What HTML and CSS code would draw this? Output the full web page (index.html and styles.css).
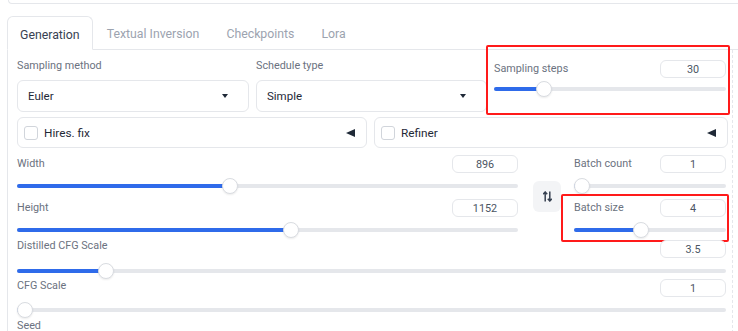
FILE: index.html
```html
<!DOCTYPE html>
<html>
<head>
  <title>txt2img</title>
  <link rel="stylesheet" href="styles.css">
</head>
<body>
  <div class="top-panel"></div>

  <div class="tabs">
    <div class="tab-nav">
      <button class="tab selected">Generation</button>
      <button class="tab">Textual Inversion</button>
      <button class="tab">Checkpoints</button>
      <button class="tab">Lora</button>
      <div class="tab-fill"></div>
    </div>

    <div class="tab-panel">
      <!-- sampler row -->
      <div class="row-sampler">
        <div class="field">
          <div class="label">Sampling method</div>
          <div class="dropdown"><span>Euler</span><i class="caret"></i></div>
        </div>
        <div class="field">
          <div class="label">Schedule type</div>
          <div class="dropdown"><span>Simple</span><i class="caret"></i></div>
        </div>
        <div class="slider slider-steps mark mark-steps">
          <div class="slider-head"><span class="label">Sampling steps</span><input class="num" value="30"></div>
          <div class="track" style="--p:0.195"><div class="fill"></div><div class="thumb"></div></div>
        </div>
      </div>

      <!-- accordions -->
      <div class="row-acc">
        <div class="accordion"><span class="check"></span><span class="acc-label">Hires. fix</span><i class="acc-arrow"></i></div>
        <div class="accordion"><span class="check"></span><span class="acc-label">Refiner</span><i class="acc-arrow"></i></div>
      </div>

      <!-- dimensions and batch -->
      <div class="row-dims">
        <div class="col-dims">
          <div class="slider">
            <div class="slider-head"><span class="label">Width</span><input class="num" value="896"></div>
            <div class="track" style="--p:0.422"><div class="fill"></div><div class="thumb"></div></div>
          </div>
          <div class="slider">
            <div class="slider-head"><span class="label">Height</span><input class="num" value="1152"></div>
            <div class="track" style="--p:0.549"><div class="fill"></div><div class="thumb"></div></div>
          </div>
        </div>
        <button class="swap" title="Switch width/height">
          <svg width="9" height="11" viewBox="0 0 9 11">
            <path d="M2.2 10.5V1M0.2 3.2L2.2 1L4.2 3.2" fill="none" stroke="#374151" stroke-width="1.5"/>
            <path d="M6.8 0.5V10M4.8 7.8L6.8 10L8.8 7.8" fill="none" stroke="#374151" stroke-width="1.5"/>
          </svg>
        </button>
        <div class="col-batch">
          <div class="slider">
            <div class="slider-head"><span class="label">Batch count</span><input class="num" value="1"></div>
            <div class="track" style="--p:0"><div class="fill"></div><div class="thumb"></div></div>
          </div>
          <div class="slider mark mark-batch">
            <div class="slider-head"><span class="label">Batch size</span><input class="num" value="4"></div>
            <div class="track" style="--p:0.433"><div class="fill"></div><div class="thumb"></div></div>
          </div>
        </div>
      </div>

      <div class="slider slider-distilled">
        <div class="slider-head"><span class="label">Distilled CFG Scale</span><input class="num" value="3.5"></div>
        <div class="track" style="--p:0.117"><div class="fill"></div><div class="thumb"></div></div>
      </div>
      <div class="slider slider-cfg">
        <div class="slider-head"><span class="label">CFG Scale</span><input class="num" value="1"></div>
        <div class="track" style="--p:0"><div class="fill"></div><div class="thumb"></div></div>
      </div>

      <div class="label seed">Seed</div>
    </div>
  </div>
</body>
</html>
```

FILE: styles.css
```css
body {
  margin: 0;
  font-family: Roboto, sans-serif;
  background-color: white;
  color: #374151;
  overflow: hidden;
}
.top-panel {
  margin-left: 8px;
  height: 3px;
  border-left: 1px solid #e5e7eb;
  border-bottom: 1px solid #e5e7eb;
  border-bottom-left-radius: 6px;
}
.tabs {
  margin-top: 12px;
  margin-left: 7px;
}
.tab-nav {
  display: flex;
  height: 34px;
}
.tab {
  font-family: inherit;
  font-size: 12.3px;
  color: #9ca3af;
  background: none;
  border: none;
  border-bottom: 1px solid #e5e7eb;
  padding: 3px 13px 0 14px;
  cursor: pointer;
}
.tab.selected {
  color: #374151;
  border: 1px solid #e5e7eb;
  border-bottom-color: white;
  border-radius: 6px 6px 0 0;
  padding: 3px 12px 0 12px;
}
.tab-fill {
  flex: 1;
  border-bottom: 1px solid #e5e7eb;
}
.tab-panel {
  margin-right: 5px;
  border-left: 1px solid #e5e7eb;
  border-right: 1px dashed #e5e7eb;
  padding: 8px 4px 0 9px;
  height: 300px;
}
.label {
  font-size: 10.8px;
  line-height: 16px;
  color: #6b7280;
}

/* sampler row */
.row-sampler {
  display: grid;
  grid-template-columns: 232px 231px 1fr;
  gap: 7px;
  height: 54px;
}
.field .label {
  margin-bottom: 6px;
}
.dropdown {
  height: 30px;
  border: 1px solid #e5e7eb;
  border-radius: 6px;
  display: flex;
  align-items: center;
  justify-content: space-between;
  padding: 0 20px 0 10px;
  font-size: 11.5px;
  color: #1f2937;
}
.caret {
  border-left: 3px solid transparent;
  border-right: 3px solid transparent;
  border-top: 4px solid #1f2937;
}

/* accordions */
.row-acc {
  display: grid;
  grid-template-columns: 350px 1fr;
  gap: 7px;
  margin-top: 5px;
}
.accordion {
  height: 29px;
  border: 1px solid #e5e7eb;
  border-radius: 6px;
  display: flex;
  align-items: center;
  padding: 0 11px 0 6px;
}
.check {
  width: 12px;
  height: 12px;
  border: 1px solid #d1d5db;
  border-radius: 3px;
  margin-right: 6px;
}
.acc-label {
  flex: 1;
  font-size: 11.8px;
  color: #1f2937;
}
.acc-arrow {
  border-top: 4px solid transparent;
  border-bottom: 4px solid transparent;
  border-right: 9px solid #1f2937;
}

/* sliders */
.slider {
  position: relative;
  margin-right: 2px;
}
.slider-head {
  display: flex;
  justify-content: space-between;
  align-items: center;
  height: 18px;
}
.num {
  width: 64px;
  height: 16px;
  padding: 0;
  border: 1px solid #e5e7eb;
  border-radius: 6px;
  text-align: center;
  font-family: inherit;
  font-size: 10.8px;
  color: #4b5563;
  outline: none;
}
.track {
  position: relative;
  height: 16px;
  margin-top: 5px;
}
.track::before {
  content: "";
  position: absolute;
  left: 0;
  right: 0;
  top: 6px;
  height: 4px;
  border-radius: 2px;
  background-color: #e5e7eb;
}
.fill {
  position: absolute;
  left: 0;
  top: 6px;
  height: 4px;
  border-radius: 2px;
  width: calc((100% - 16px) * var(--p) + 8px);
  background-color: #2f6bea;
}
.thumb {
  position: absolute;
  top: 0;
  left: calc((100% - 16px) * var(--p));
  width: 14px;
  height: 14px;
  border: 1px solid #d9dce1;
  border-radius: 50%;
  background-color: white;
  box-shadow: 0 1px 2px rgba(0, 0, 0, 0.08);
}
.slider-steps {
  padding-top: 2px;
}
.slider-steps .track {
  margin-top: 3px;
}

/* width / height / batch */
.row-dims {
  display: flex;
  align-items: center;
  margin-top: 7px;
}
.col-dims {
  width: 503px;
  display: flex;
  flex-direction: column;
  gap: 5px;
}
.col-batch {
  flex: 1;
  display: flex;
  flex-direction: column;
  gap: 5px;
}
.swap {
  width: 28px;
  height: 31px;
  margin: 0 13px 0 13px;
  border: none;
  border-radius: 6px;
  background-color: #f3f4f6;
  display: flex;
  align-items: center;
  justify-content: center;
  padding: 0;
  cursor: pointer;
}
.slider-distilled {
  margin-top: 2px;
}
.slider-distilled .label {
  margin-top: -6px;
}
.slider-cfg {
  margin-top: 0;
}
.slider-cfg .label {
  margin-top: -4px;
}

/* red annotation boxes */
.mark::after {
  content: "";
  position: absolute;
  border: 2px solid #ff1a1a;
  border-radius: 2px;
  pointer-events: none;
}
.mark-steps::after {
  left: -8px;
  right: -4px;
  top: -13px;
  bottom: -3px;
}
.mark-batch::after {
  left: -13px;
  right: -3px;
  top: -5px;
  bottom: -4px;
}
```
